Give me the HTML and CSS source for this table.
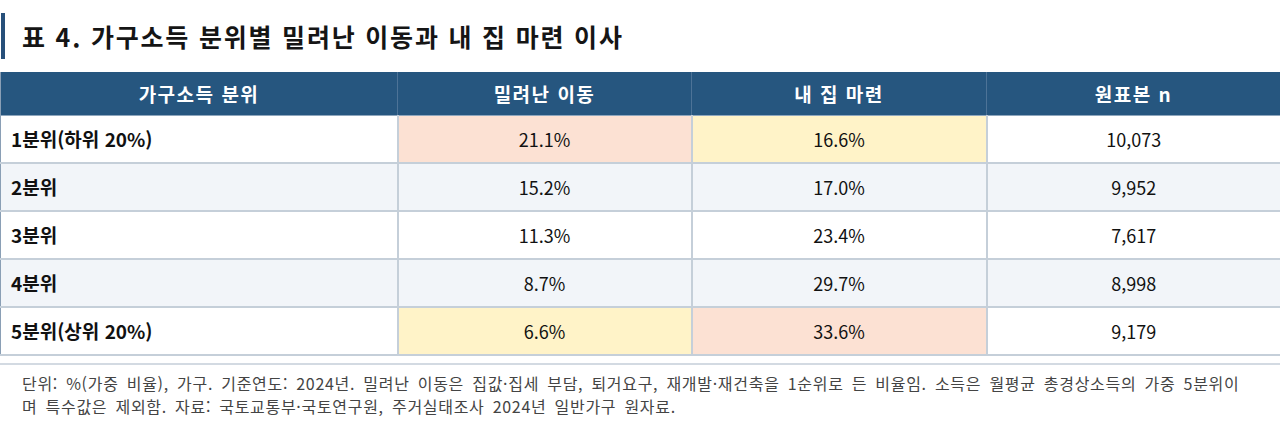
FILE: index.html
```html
<!DOCTYPE html>
<html lang="ko">
<head>
<meta charset="utf-8">
<title>표 4</title>
<link rel="stylesheet" href="styles.css">
</head>
<body>
<div class="page">
  <h2 class="title">표 4. 가구소득 분위별 밀려난 이동과 내 집 마련 이사</h2>
  <table class="data">
    <colgroup>
      <col class="c1"><col class="c2"><col class="c3"><col class="c4">
    </colgroup>
    <thead>
      <tr><th>가구소득 분위</th><th>밀려난 이동</th><th>내 집 마련</th><th>원표본 n</th></tr>
    </thead>
    <tbody>
      <tr><td class="lab">1분위(하위 20%)</td><td class="peach">21.1%</td><td class="yellow">16.6%</td><td>10,073</td></tr>
      <tr class="alt"><td class="lab">2분위</td><td>15.2%</td><td>17.0%</td><td>9,952</td></tr>
      <tr><td class="lab">3분위</td><td>11.3%</td><td>23.4%</td><td>7,617</td></tr>
      <tr class="alt"><td class="lab">4분위</td><td>8.7%</td><td>29.7%</td><td>8,998</td></tr>
      <tr><td class="lab">5분위(상위 20%)</td><td class="yellow">6.6%</td><td class="peach">33.6%</td><td>9,179</td></tr>
    </tbody>
  </table>
  <p class="note">단위: %(가중 비율), 가구. 기준연도: 2024년. 밀려난 이동은 집값·집세 부담, 퇴거요구, 재개발·재건축을 1순위로 든 비율임. 소득은 월평균 총경상소득의 가중 5분위이며 특수값은 제외함. 자료: 국토교통부·국토연구원, 주거실태조사 2024년 일반가구 원자료.</p>
</div>
</body>
</html>
```

FILE: styles.css
```css
html, body {
  margin: 0;
  padding: 0;
  background: #ffffff;
}
body {
  font-family: "Noto Sans CJK KR", "Noto Sans", sans-serif;
  color: #111;
}
.page {
  width: 1280px;
}
.title {
  margin: 13px 0 0 1px;
  padding: 0 0 0 17px;
  border-left: 4px solid #27507a;
  height: 46px;
  line-height: 46px;
  font-size: 25px;
  font-weight: 700;
  color: #151515;
  letter-spacing: 1.8px;
}
.data {
  margin-top: 13px;
  width: 1280px;
  border-collapse: collapse;
  table-layout: fixed;
  border-left: 1px solid #8a9fb5;
  border-right: 1px solid #c3ccd6;
}
.c1 { width: 397px; }
.c2 { width: 294px; }
.c3 { width: 295px; }
.c4 { width: 294px; }
.data th {
  background: #26567f;
  color: #ffffff;
  font-size: 19px;
  font-weight: 700;
  letter-spacing: 1.5px;
  height: 43px;
  padding: 0;
  text-align: center;
  border-left: 1px solid #4d7397;
  border-bottom: 1px solid #8ea6bd;
  box-sizing: border-box;
}
.data th:first-child { border-left: none; }
.data td {
  height: 46px;
  padding: 0;
  text-align: center;
  font-size: 18px;
  color: #111;
  border: 2px solid #c5cfd9;
  border-top: none;
  box-sizing: content-box;
}
.data td:first-child { border-left: none; }
.data td:last-child { border-right: none; }
.data td.lab {
  text-align: left;
  padding-left: 10px;
  font-weight: 700;
  font-size: 19px;
}
.data tr.alt td { background: #f2f5f9; }
.data td.peach { background: #fce1d3; }
.data td.yellow { background: #fff3c8; }
.note {
  margin: 7px 0 0 0;
  border-top: 2px solid #d3dae2;
  padding: 7px 36px 0 22px;
  font-size: 16px;
  line-height: 23px;
  letter-spacing: 0.7px;
  word-spacing: 3px;
  color: #444444;
}
```
